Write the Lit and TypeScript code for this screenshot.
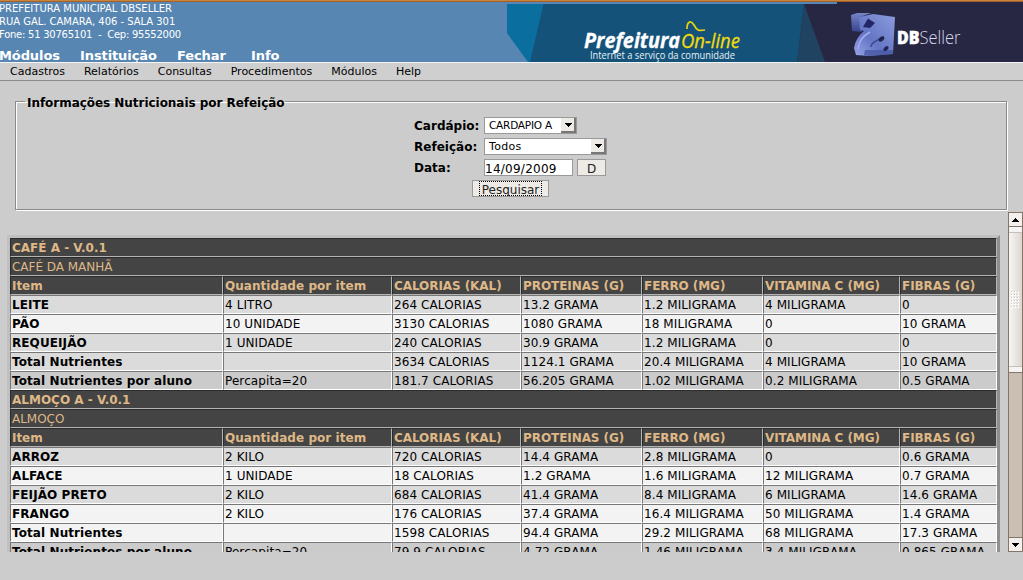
import { LitElement, html, css, svg } from "lit";
import { customElement } from "lit/decorators.js";

type Row = { kind: string; cells: string[] };
const header = ["Item", "Quantidade por item", "CALORIAS (KAL)", "PROTEINAS (G)", "FERRO (MG)", "VITAMINA C (MG)", "FIBRAS (G)"];
const rows: Row[] = [
  { kind: "title", cells: ["CAFÉ A - V.0.1"] },
  { kind: "sub", cells: ["CAFÉ DA MANHÃ"] },
  { kind: "head", cells: header },
  { kind: "even", cells: ["LEITE", "4 LITRO", "264 CALORIAS", "13.2 GRAMA", "1.2 MILIGRAMA", "4 MILIGRAMA", "0"] },
  { kind: "odd", cells: ["PÃO", "10 UNIDADE", "3130 CALORIAS", "1080 GRAMA", "18 MILIGRAMA", "0", "10 GRAMA"] },
  { kind: "even", cells: ["REQUEIJÃO", "1 UNIDADE", "240 CALORIAS", "30.9 GRAMA", "1.2 MILIGRAMA", "0", "0"] },
  { kind: "even", cells: ["Total Nutrientes", "", "3634 CALORIAS", "1124.1 GRAMA", "20.4 MILIGRAMA", "4 MILIGRAMA", "10 GRAMA"] },
  { kind: "total", cells: ["Total Nutrientes por aluno", "Percapita=20", "181.7 CALORIAS", "56.205 GRAMA", "1.02 MILIGRAMA", "0.2 MILIGRAMA", "0.5 GRAMA"] },
  { kind: "title", cells: ["ALMOÇO A - V.0.1"] },
  { kind: "sub", cells: ["ALMOÇO"] },
  { kind: "head", cells: header },
  { kind: "even", cells: ["ARROZ", "2 KILO", "720 CALORIAS", "14.4 GRAMA", "2.8 MILIGRAMA", "0", "0.6 GRAMA"] },
  { kind: "odd", cells: ["ALFACE", "1 UNIDADE", "18 CALORIAS", "1.2 GRAMA", "1.6 MILIGRAMA", "12 MILIGRAMA", "0.7 GRAMA"] },
  { kind: "even", cells: ["FEIJÃO PRETO", "2 KILO", "684 CALORIAS", "41.4 GRAMA", "8.4 MILIGRAMA", "6 MILIGRAMA", "14.6 GRAMA"] },
  { kind: "odd", cells: ["FRANGO", "2 KILO", "176 CALORIAS", "37.4 GRAMA", "16.4 MILIGRAMA", "50 MILIGRAMA", "1.4 GRAMA"] },
  { kind: "odd", cells: ["Total Nutrientes", "", "1598 CALORIAS", "94.4 GRAMA", "29.2 MILIGRAMA", "68 MILIGRAMA", "17.3 GRAMA"] },
  { kind: "total", cells: ["Total Nutrientes por aluno", "Percapita=20", "79.9 CALORIAS", "4.72 GRAMA", "1.46 MILIGRAMA", "3.4 MILIGRAMA", "0.865 GRAMA"] },
];

const grip = [0, 3, 6].flatMap((x) => [0, 3, 6, 9, 12, 15].map((y) => svg`<rect x=${x} y=${y} width="2" height="2" fill="#fff"/><rect x=${x} y=${y} width="1" height="1" fill="#c9c3bc"/>`));
const down = html`<svg width="7" height="4" viewBox="0 0 7 4" shape-rendering="crispEdges"><path d="M0 0H7V1H6V2H5V3H4V4H3V3H2V2H1V1H0Z"/></svg>`;
const up = html`<svg width="7" height="4" viewBox="0 0 7 4" shape-rendering="crispEdges"><path d="M0 4H7V3H6V2H5V1H4V0H3V1H2V2H1V3H0Z"/></svg>`;

@customElement("app-root")
export class AppRoot extends LitElement {
  static styles = css`
    :host { display: block; width: 1023px; height: 580px; overflow: hidden; background: #ccc; color: #000; font: 12px/15px "DejaVu Sans", sans-serif; }
    * { box-sizing: border-box; }
    .strip { height: 2px; background: #c98439; border-bottom: 1px solid #a2622d; }
    .top { height: 61px; background: #5786b2; border-bottom: 1px solid #f4f4f4; display: flex; justify-content: space-between; }
    .org { color: #fff; font-size: 10px; line-height: 13px; white-space: pre; display: flex; flex-direction: column; margin-left: -1px; }
    .org .street { letter-spacing: -.03px; }
    .org .phone { letter-spacing: -.25px; }
    .main { display: flex; font-size: 13px; line-height: 15px; font-weight: bold; margin-top: 7px; letter-spacing: -.1px; }
    .main span:nth-child(1) { width: 81px; } .main span:nth-child(2) { width: 97px; } .main span:nth-child(3) { width: 74px; }
    .banner { display: block; flex: none; }
    .menu { height: 18px; background: #cfcfcf; border-bottom: 1px solid #8b8b8b; font-size: 11px; line-height: 17px; display: flex; padding-left: 10px; gap: 19px; }
    .box { margin: 14px 16px 0 15px; height: 115px; padding: 0; min-width: 0; border: 1px solid #8a8a8a; box-shadow: 1px 1px 0 #fff, inset 1px 1px 0 #fff; }
    .box legend { margin-left: 9px; padding: 0 1px 0 2px; font-weight: bold; height: 13px; line-height: 16px; letter-spacing: -.04px; }
    .fields { margin: 7px 0 0 398px; }
    .line { display: flex; height: 21px; align-items: center; }
    .line label { font-weight: bold; width: 70px; white-space: nowrap; padding-top: 1px; letter-spacing: .02px; }
    .ctl { height: 17px; border: 1px solid #999; background: #fff; display: flex; justify-content: space-between; font-size: 11px; line-height: 15px; padding-left: 4px; white-space: nowrap; }
    .c1 { width: 93px; letter-spacing: -.22px; font-size: 10.5px; } .c2 { width: 123px; letter-spacing: .3px; }
    .arrow { width: 15px; height: 15px; padding: 1px 0 0 1px; background: #eeebe7; border-right: 2px solid #777; border-bottom: 2px solid #777; display: grid; place-items: center; }
    .date { width: 89px; padding-left: 0; font-size: 12px; line-height: 18px; letter-spacing: .25px; }
    .btn { height: 17px; border: 1px solid #999; background: #eeebe7; color: #222; text-align: center; line-height: 18px; overflow: hidden; }
    .d { width: 29px; margin-left: 4px; }
    .go { display: block; width: 77px; margin: 2px 0 0 58px; padding: 0 6px; }
    .focus { display: block; height: 15px; border: 1px dotted #000; line-height: 16px; }
    .scroll { height: 340px; margin-top: 2px; display: flex; justify-content: space-between; overflow: hidden; }
    .table { width: 993px; margin: 23px 0 0 7px; height: 380px; border: 3px solid; border-color: #c0c0c0 #8f8f8f #8f8f8f #c0c0c0; flex: none; }
    .row { display: grid; grid-template-columns: 213px 169px 129px 121px 121px 137px 97px; height: 19px; letter-spacing: .09px; }
    .row div { border: 1px solid; border-color: #777 #fff #fff #777; padding: 2px 0 0 1px; white-space: nowrap; overflow: hidden; }
    .row div:first-child, .title, .head { font-weight: bold; }
    .even { background: #dbdbdb; } .odd { background: #f3f3f3; } .total { background: #cbcbcb; }
    .title, .sub, .head { background: #444; color: #deb887; }
    .row.title { letter-spacing: 0; } .row.head { letter-spacing: -.07px; } .head div:nth-child(2) { letter-spacing: .05px; } .row.sub { letter-spacing: -.03px; }
    .title div, .sub div, .head div { border-color: #2b2b2b #b4b4b4 #b4b4b4 #2b2b2b; }
    .title div, .sub div { grid-column: 1 / -1; }
    .sub div:first-child { font-weight: normal; }
    .bar { width: 15px; height: 340px; border: 1px solid #84756a; background: #cbbfb4; display: flex; flex-direction: column; flex: none; }
    .end { height: 14px; flex: none; background: #f2efec; display: grid; place-items: center; border-bottom: 1px solid #84756a; }
    .end.last { border-bottom: 0; border-top: 1px solid #84756a; margin-top: auto; }
    .thumb { height: 146px; background: linear-gradient(90deg, #f8f6f4, #dcd6d0); border-bottom: 1px solid #84756a; display: flex; flex-direction: column; justify-content: space-between; align-items: center; }
    .cap { height: 6px; width: 13px; background: #f6f4f2; border-bottom: 1px solid #c8c0b8; }
    .cap.low { border-bottom: 0; border-top: 1px solid #c8c0b8; }
  `;

  banner() {
    return html`<svg class="banner" width="516" height="60" viewBox="507 2 516 60">
      <defs>
        <linearGradient id="cube" x1="0" y1="1" x2="1" y2="0"><stop offset="0" stop-color="#98a5e8"/><stop offset=".4" stop-color="#6475c4"/><stop offset="1" stop-color="#8c9cdc"/></linearGradient>
        <linearGradient id="side" x1="0" y1="0" x2="0" y2="1"><stop offset="0" stop-color="#7684c6"/><stop offset="1" stop-color="#35448f"/></linearGradient>
        <filter id="soft" x="-10%" y="-10%" width="120%" height="120%"><feGaussianBlur stdDeviation=".6"/></filter>
      </defs>
      <path fill="#0a6e9f" d="M507 4H544V62H528L507 33Z"/>
      <path fill="#14527a" d="M543.500 4H810V62H530Z"/>
      <path fill="#272744" d="M804 4H837V2H1023V62H797Z"/>
      <path fill="#204361" d="M804 4L797 62H825Z"/>
      <g font-family="Open Sans, Noto Sans, sans-serif" font-style="italic">
        <text x="584" y="47.500" fill="#fff" font-size="20.500" font-weight="700" stroke="#fff" stroke-width=".3" textLength="96" lengthAdjust="spacingAndGlyphs">Prefeitura</text>
        <text x="681" y="47.500" fill="#f1db08" stroke="#f1db08" stroke-width=".3" font-size="20.500" textLength="59" lengthAdjust="spacingAndGlyphs">On-line</text>
      </g>
      <path d="M687 29C687 21 691 20 694 25C697 31 699 31 705 30" fill="none" stroke="#e6d20d" stroke-width="1.700"/>
      <text x="590" y="58.700" fill="#e7f2f8" font-family="Open Sans, Noto Sans, sans-serif" font-size="10" textLength="145" lengthAdjust="spacingAndGlyphs">Internet a serviço da comunidade</text>
      <g filter="url(#soft)">
        <path fill="url(#side)" d="M851 15L857 13H871L860 17L862 32L852 31Z"/>
        <path fill="url(#cube)" d="M859 17L873 14L895 17L893 54L869 56L856 55L854 48Q856 37 864 31L860 30Z"/>
        <path fill="#4353a0" opacity=".7" d="M864 55L865 50L893 50V54L869 56Z"/>
        <path fill="#242766" d="M868 18.500L875 23L870 28L863 27Z"/>
        <path d="M871 47C871 42 876 42 879 39L884 37" fill="none" stroke="#3c4796" stroke-width="1.500"/>
        <ellipse cx="881.500" cy="39" rx="3.300" ry="2" fill="#202452" transform="rotate(-45 881.500 39)"/>
        <ellipse cx="886" cy="48.500" rx="3" ry="1.800" fill="#202452" transform="rotate(-45 886 48.500)"/>
        <path d="M858 49Q859 38 870 32" fill="none" stroke="#a3aff0" stroke-width="1.500"/>
      </g>
      <text x="897" y="43.500" fill="#fff" font-family="Open Sans, sans-serif" font-size="18" font-weight="800" textLength="22.500" lengthAdjust="spacingAndGlyphs" stroke="#fff" stroke-width=".5">DB</text>
      <text x="919.500" y="43.500" fill="#d8d8e6" font-family="Open Sans, sans-serif" font-size="18" font-weight="300" textLength="41" lengthAdjust="spacingAndGlyphs">Seller</text>
    </svg>`;
  }

  render() {
    return html`
      <div class="strip"></div>
      <header class="top">
        <div class="org"><span>PREFEITURA MUNICIPAL DBSELLER</span><span class="street">RUA GAL. CAMARA, 406 - SALA 301</span><span class="phone">Fone: 51 30765101  -  Cep: 95552000</span><nav class="main"><span>Módulos</span><span>Instituição</span><span>Fechar</span><span>Info</span></nav></div>
        ${this.banner()}
      </header>
      <nav class="menu">${["Cadastros", "Relatórios", "Consultas", "Procedimentos", "Módulos", "Help"].map((m) => html`<span>${m}</span>`)}</nav>
      <fieldset class="box"><legend>Informações Nutricionais por Refeição</legend>
        <div class="fields">
          <div class="line"><label>Cardápio:</label><div class="ctl c1"><span>CARDAPIO A</span><span class="arrow">${down}</span></div></div>
          <div class="line"><label>Refeição:</label><div class="ctl c2"><span>Todos</span><span class="arrow">${down}</span></div></div>
          <div class="line"><label>Data:</label><div class="ctl date">14/09/2009</div><div class="btn d">D</div></div>
          <div class="btn go"><span class="focus">Pesquisar</span></div>
        </div>
      </fieldset>
      <section class="scroll">
        <div class="table">${rows.map((r) => html`<div class="row ${r.kind}">${r.cells.map((c) => html`<div>${c}</div>`)}</div>`)}</div>
        <div class="bar"><div class="end">${up}</div>
          <div class="thumb"><div class="cap"></div><svg width="9" height="17" viewBox="0 0 9 17" shape-rendering="crispEdges">${grip}</svg><div class="cap low"></div></div>
          <div class="end last">${down}</div></div>
      </section>`;
  }
}
